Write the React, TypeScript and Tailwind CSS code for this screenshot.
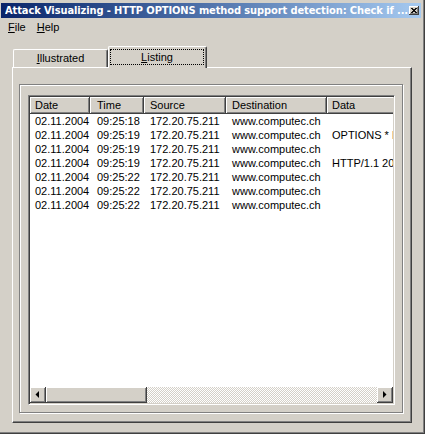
import React from 'react';

const rows = [
  { date: '02.11.2004', time: '09:25:18', source: '172.20.75.211', dest: 'www.computec.ch', data: '' },
  { date: '02.11.2004', time: '09:25:19', source: '172.20.75.211', dest: 'www.computec.ch', data: 'OPTIONS * HTTP/1.1' },
  { date: '02.11.2004', time: '09:25:19', source: '172.20.75.211', dest: 'www.computec.ch', data: '' },
  { date: '02.11.2004', time: '09:25:19', source: '172.20.75.211', dest: 'www.computec.ch', data: 'HTTP/1.1 200 OK' },
  { date: '02.11.2004', time: '09:25:22', source: '172.20.75.211', dest: 'www.computec.ch', data: '' },
  { date: '02.11.2004', time: '09:25:22', source: '172.20.75.211', dest: 'www.computec.ch', data: '' },
  { date: '02.11.2004', time: '09:25:22', source: '172.20.75.211', dest: 'www.computec.ch', data: '' },
];

const columns = [
  { label: 'Date', width: 'w-[60px]', pad: 'pl-[5px]' },
  { label: 'Time', width: 'w-[54px]', pad: 'pl-[7px]' },
  { label: 'Source', width: 'w-[82px]', pad: 'pl-[6px]' },
  { label: 'Destination', width: 'w-[101px]', pad: 'pl-[6px]' },
  { label: 'Data', width: 'w-[100px]', pad: 'pl-[5px]' },
];

const raised = 'bg-[#d4d0c8] shadow-[inset_-1px_-1px_#404040,inset_1px_1px_#ffffff,inset_-2px_-2px_#808080]';

function Arrow({ dir }: { dir: 'left' | 'right' }) {
  return (
    <svg width="16" height="16" viewBox="0 0 16 16">
      {dir === 'left' ? <polygon points="9,4 9,11 5.5,7.5" fill="#000" /> : <polygon points="6,4 6,11 9.5,7.5" fill="#000" />}
    </svg>
  );
}

export default function App() {
  return (
    <div className="w-[425px] h-[434px] bg-[#d4d0c8] flex flex-col pt-[3px] pl-[1px] pr-[4px] pb-[2px] shadow-[inset_-1px_-1px_#404040,inset_-2px_-2px_#808080] font-['Liberation_Sans',Arial,sans-serif] text-[11px] text-black select-none">
      {/* title bar */}
      <div className="h-[15px] flex items-center justify-between pl-[4px] pr-[2px] bg-linear-to-r from-[#0a246a] to-[#a6caf0]">
        <span className="text-white font-bold text-[11px] leading-none whitespace-nowrap overflow-hidden font-['DejaVu_Sans_Condensed','DejaVu_Sans',sans-serif] tracking-[-0.1px]">
          Attack Visualizing - HTTP OPTIONS method support detection: Check if ...
        </span>
        <div className={`w-[10px] h-[9px] shrink-0 flex items-center justify-center ${raised}`}>
          <svg width="6" height="5" viewBox="0 0 6 5">
            <path d="M0 0L5 5M1 0L6 5M5 0L0 5M6 0L1 5" stroke="#000" strokeWidth="0.9" />
          </svg>
        </div>
      </div>

      {/* menu */}
      <div className="h-[19px] flex items-center pl-[7px]">
        <span><span className="underline">F</span>ile</span>
        <span className="ml-[11px]"><span className="underline">H</span>elp</span>
      </div>

      {/* tabs */}
      <div className="flex flex-col flex-1 ml-[11px] mr-[9px] mt-[9px] mb-[9px]">
        <div className="flex items-end h-[21px] pl-[1px]">
          <div className="w-[95px] h-[18px] flex items-center justify-center border-l border-t border-white border-r border-r-[#404040] rounded-tl-[2px] rounded-tr-[2px] shadow-[inset_-1px_0_#808080]">
            <span><span className="underline">I</span>llustrated</span>
          </div>
          <div className="relative z-10 w-[99px] h-[22px] -mb-px bg-[#d4d0c8] flex border-l border-t border-white border-r border-r-[#404040] rounded-tl-[2px] rounded-tr-[2px] shadow-[inset_-1px_0_#808080] pt-[2px] pl-px pr-[2px] pb-[3px]">
            <div className="flex-1 flex items-center justify-center border border-dotted border-black">
              <span><span className="underline">L</span>isting</span>
            </div>
          </div>
        </div>

        {/* tab page */}
        <div className="flex-1 flex flex-col border border-white border-r-[#404040] border-b-[#404040] shadow-[inset_-1px_-1px_#808080] pt-[16px] pl-[6px] pr-[8px] pb-[9px]">
          <div className="flex-1 flex flex-col border border-[#808080] shadow-[inset_1px_1px_#ffffff,1px_1px_#ffffff] pt-[10px] pl-[8px] pr-[7px] pb-[7px]">
            {/* list view */}
            <div className="flex-1 flex flex-col bg-white border border-t-[#808080] border-l-[#808080] border-r-white border-b-white shadow-[inset_1px_1px_#404040,inset_-1px_-1px_#d4d0c8] p-px overflow-hidden">
              <div className="flex-1 flex flex-col overflow-hidden">
                <div className="flex h-[17px] shrink-0">
                  {columns.map((c) => (
                    <div key={c.label} className={`${c.width} ${c.pad} shrink-0 flex items-center ${raised}`}>
                      {c.label}
                    </div>
                  ))}
                </div>
                <div className="flex-1">
                  {rows.map((r, i) => (
                    <div key={i} className="flex h-[14px] items-center whitespace-nowrap">
                      <div className={`${columns[0].width} ${columns[0].pad} shrink-0 overflow-hidden`}>{r.date}</div>
                      <div className={`${columns[1].width} ${columns[1].pad} shrink-0 overflow-hidden`}>{r.time}</div>
                      <div className={`${columns[2].width} ${columns[2].pad} shrink-0 overflow-hidden`}>{r.source}</div>
                      <div className={`${columns[3].width} ${columns[3].pad} shrink-0 overflow-hidden`}>{r.dest}</div>
                      <div className={`${columns[4].width} ${columns[4].pad} shrink-0 overflow-hidden`}>{r.data}</div>
                    </div>
                  ))}
                </div>
                {/* horizontal scrollbar */}
                <div className="flex h-[16px] shrink-0">
                  <div className={`w-[16px] h-[16px] ${raised}`}>
                    <Arrow dir="left" />
                  </div>
                  <div className={`w-[101px] h-[16px] ${raised}`} />
                  <div className="flex-1 bg-[repeating-conic-gradient(#d4d0c8_0_25%,#ffffff_0_50%)] bg-size-[2px_2px]" />
                  <div className={`w-[16px] h-[16px] ${raised}`}>
                    <Arrow dir="right" />
                  </div>
                </div>
              </div>
            </div>
          </div>
        </div>
      </div>
    </div>
  );
}
